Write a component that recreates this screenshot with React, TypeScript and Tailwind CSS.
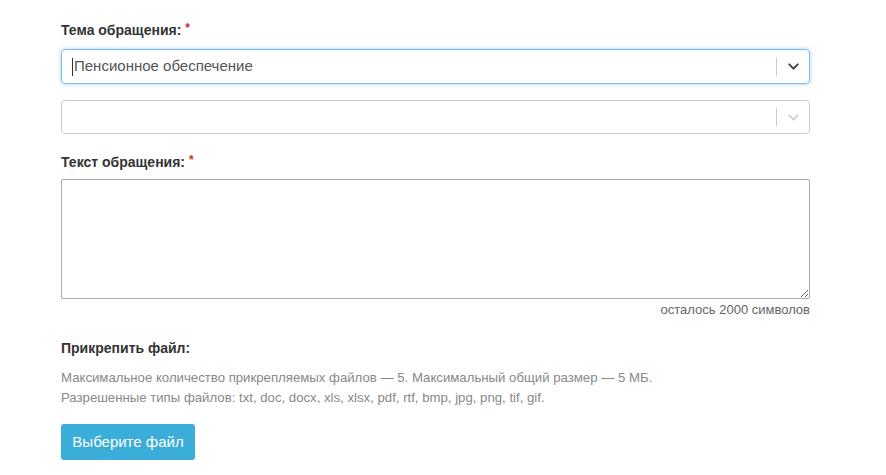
import { ChevronDown } from "lucide-react";

function Label({ text }: { text: string }) {
  return (
    <div className="text-[14px] font-bold text-[#333] leading-[18px]">
      {text}
      <span className="text-[#c9302c] ml-[4px] relative -top-[3px] text-[12px]">*</span>
    </div>
  );
}

export default function App() {
  return (
    <div
      className="min-h-screen bg-white"
      style={{ fontFamily: '"Liberation Sans", "Noto Sans", sans-serif' }}
    >
      <div className="w-[749px] ml-[61px] pt-[21px]">
        <Label text="Тема обращения:" />

        {/* theme select */}
        <div className="mt-[9px] h-[35px] flex items-center border border-[#7cbdf0] rounded-[4px] shadow-[0_0_4px_rgba(102,175,233,0.6)]">
          <div className="flex-1 flex items-center pl-[10px] text-[15px] text-[#555]">
            <span className="w-px h-[18px] bg-[#333] mr-[1px]" />
            Пенсионное обеспечение
          </div>
          <div className="w-px h-[18px] bg-[#ccc]" />
          <div className="w-[32px] flex justify-center text-[#444]">
            <ChevronDown size={17} strokeWidth={2.75} />
          </div>
        </div>

        {/* subtheme select */}
        <div className="mt-[16px] h-[34px] flex items-center border border-[#ccc] rounded-[4px]">
          <div className="flex-1" />
          <div className="w-px h-[18px] bg-[#ccc]" />
          <div className="w-[32px] flex justify-center text-[#ccc]">
            <ChevronDown size={17} strokeWidth={2} />
          </div>
        </div>

        <div className="mt-[19px]">
          <Label text="Текст обращения:" />
        </div>

        <textarea className="mt-[7px] block w-full h-[120px] border border-[#a9a9a9] rounded-[2px] outline-none resize-y" />

        <div className="mt-[3px] text-right text-[13px] text-[#666] leading-[16px]">
          осталось 2000 символов
        </div>

        <div className="mt-[21px] text-[14px] font-bold text-[#333] leading-[18px]">
          Прикрепить файл:
        </div>

        <div className="mt-[11px] text-[13.2px] text-[#888] leading-[20px]">
          <div>Максимальное количество прикрепляемых файлов — 5. Максимальный общий размер — 5 МБ.</div>
          <div>Разрешенные типы файлов: txt, doc, docx, xls, xlsx, pdf, rtf, bmp, jpg, png, tif, gif.</div>
        </div>

        <button className="mt-[16px] w-[134px] h-[36px] bg-[#3badd9] text-white text-[15px] rounded-[3px]">
          Выберите файл
        </button>
      </div>
    </div>
  );
}
